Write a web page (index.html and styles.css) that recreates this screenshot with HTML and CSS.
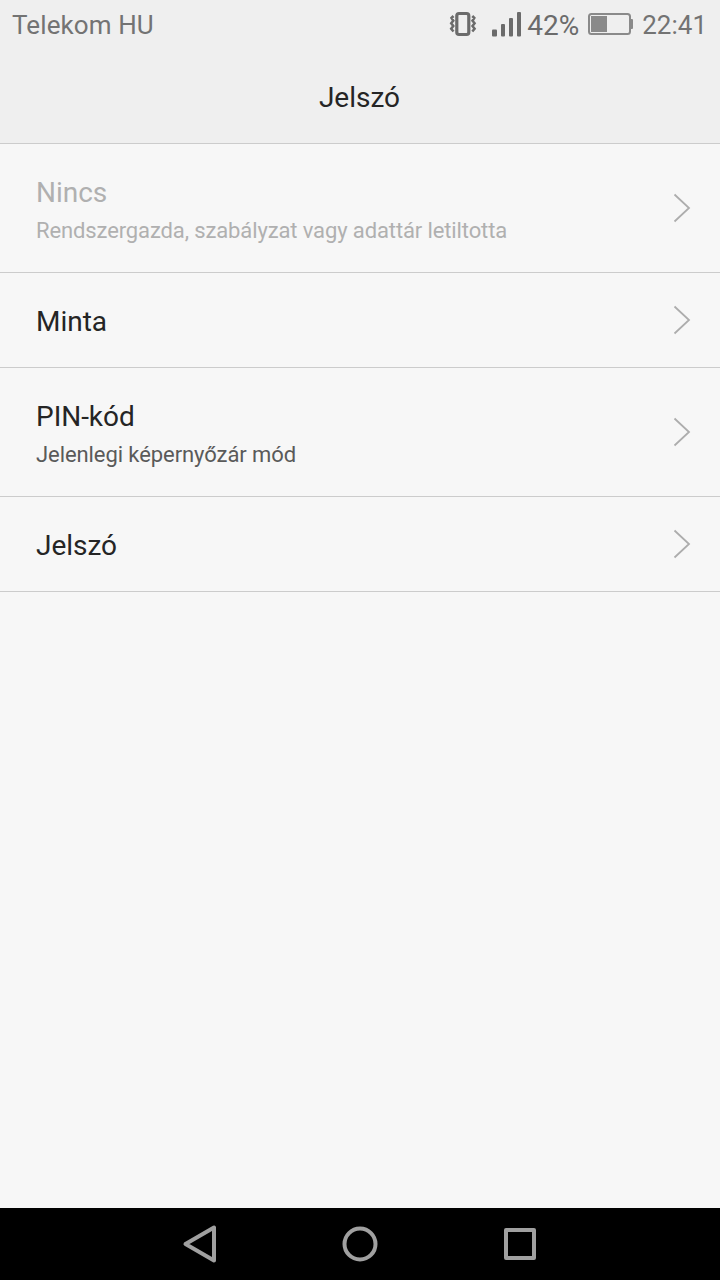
FILE: index.html
```
<!DOCTYPE html>
<html lang="hu">

<head>
    <meta charset="UTF-8" />
    <meta name="viewport" content="width=device-width, initial-scale=1.0" />
    <title>Jelszó</title>
    <link rel="stylesheet" href="styles.css">
</head>

<body>
    <div class="screen">
        <header class="header">
            <!-- status bar -->
            <div class="status">
                <span class="carrier">Telekom HU</span>
                <svg class="vibrate" width="28" height="26" viewBox="0 0 28 26" fill="none" stroke="#6b6b6b">
                    <rect x="7.8" y="2.5" width="12" height="21" rx="2.2" stroke-width="3.2" />
                    <path d="M4.5 5L2.5 7L4.3 9.7L2.2 12.2L4.3 15L2.2 17.7L4.5 20.5M23.3 5L25.3 7L23.5 9.7L25.6 12.2L23.5 15L25.6 17.7L23.3 20.5" stroke-width="2.5" />
                </svg>
                <svg class="signal" width="30" height="26" viewBox="0 0 30 26" fill="#6b6b6b">
                    <rect x="0" y="17.5" width="5" height="7" rx="1" />
                    <rect x="9" y="12" width="4" height="12.5" rx="1" />
                    <rect x="17" y="6" width="4" height="18.5" rx="1" />
                    <rect x="25" y="0" width="4" height="24.5" rx="1" />
                </svg>
                <span class="percent">42%</span>
                <svg class="battery" width="46" height="22" viewBox="0 0 46 22">
                    <rect x="1" y="1" width="41" height="20" rx="2.5" fill="none" stroke="#8a8a8a" stroke-width="2" />
                    <rect x="3" y="3" width="16" height="16" fill="#8a8a8a" />
                    <path d="M42 6H44Q45 6 45 7V15Q45 16 44 16H42Z" fill="#8a8a8a" />
                </svg>
                <span class="clock">22:41</span>
            </div>
            <h1 class="title">Jelszó</h1>
        </header>

        <ul class="list">
            <li class="item disabled">
                <div class="text">
                    <p class="name">Nincs</p>
                    <p class="desc">Rendszergazda, szabályzat vagy adattár letiltotta</p>
                </div>
                <svg class="arrow" width="18" height="30" viewBox="0 0 18 30"><path d="M1.5 1.5L16 15L1.5 28.5" /></svg>
            </li>
            <li class="item">
                <div class="text">
                    <p class="name">Minta</p>
                </div>
                <svg class="arrow" width="18" height="30" viewBox="0 0 18 30"><path d="M1.5 1.5L16 15L1.5 28.5" /></svg>
            </li>
            <li class="item">
                <div class="text">
                    <p class="name">PIN-kód</p>
                    <p class="desc">Jelenlegi képernyőzár mód</p>
                </div>
                <svg class="arrow" width="18" height="30" viewBox="0 0 18 30"><path d="M1.5 1.5L16 15L1.5 28.5" /></svg>
            </li>
            <li class="item">
                <div class="text">
                    <p class="name">Jelszó</p>
                </div>
                <svg class="arrow" width="18" height="30" viewBox="0 0 18 30"><path d="M1.5 1.5L16 15L1.5 28.5" /></svg>
            </li>
        </ul>

        <!-- navigation buttons -->
        <nav class="navbar">
            <svg width="40" height="40" viewBox="0 0 40 40"><path d="M34 3.5V36.5L5.5 20Z" /></svg>
            <svg width="40" height="40" viewBox="0 0 40 40"><circle cx="20" cy="20" r="15.5" /></svg>
            <svg width="40" height="40" viewBox="0 0 40 40"><rect x="6" y="6" width="28" height="28" /></svg>
        </nav>
    </div>
</body>

</html>
```
FILE: styles.css
```
* {
    margin: 0;
    padding: 0;
    box-sizing: border-box;
}

body {
    font-family: Roboto, "Noto Sans", sans-serif;
    color: #252525;
    background-color: #f7f7f7;
}

li {
    list-style: none;
}

svg {
    display: block;
    flex: none;
}

.screen {
    display: flex;
    flex-direction: column;
    width: 720px;
    height: 1280px;
}

.header {
    height: 144px;
    background-color: #efefef;
    border-bottom: 1px solid #cccccc;
}

.status {
    display: flex;
    align-items: center;
    height: 50px;
    padding: 0 13px 0 12px;
    font-size: 26px;
    line-height: 30px;
    color: #737373;
}

.carrier {
    margin-right: auto;
    letter-spacing: 0.1px;
}

.vibrate {
    margin: -3px 15px 0 0;
}

.signal {
    margin: -1px 5px 0 0;
}

.percent {
    padding-top: 2px;
    font-size: 28px;
    color: #6b6b6b;
}

.battery {
    margin: -2px 8px 0 9px;
}

.title {
    padding: 31px 1px 0 0;
    font-size: 28px;
    font-weight: 400;
    line-height: 33px;
    text-align: center;
}

.list {
    flex: 1;
}

.item {
    display: flex;
    align-items: center;
    justify-content: space-between;
    height: 95px;
    padding: 0 29px 0 36px;
    border-bottom: 1px solid #cccccc;
}

.item:has(.desc) {
    height: 129px;
}

.text {
    align-self: flex-start;
    padding-top: 32px;
}

.name {
    font-size: 28px;
    line-height: 33px;
    letter-spacing: -0.03px;
}

.desc {
    margin-top: 9px;
    font-size: 22px;
    line-height: 26px;
    letter-spacing: -0.08px;
    color: #5a5a5a;
}

.disabled .name,
.disabled .desc {
    color: #b0b0b0;
}

.disabled .desc {
    letter-spacing: -0.12px;
}

.arrow path {
    fill: none;
    stroke: #adadad;
    stroke-width: 1.8;
}

.navbar {
    display: flex;
    align-items: center;
    justify-content: center;
    gap: 120px;
    height: 72px;
    background-color: #000;
}

.navbar svg {
    fill: none;
    stroke: #a0a0a0;
    stroke-width: 4;
    stroke-linejoin: round;
}
```
